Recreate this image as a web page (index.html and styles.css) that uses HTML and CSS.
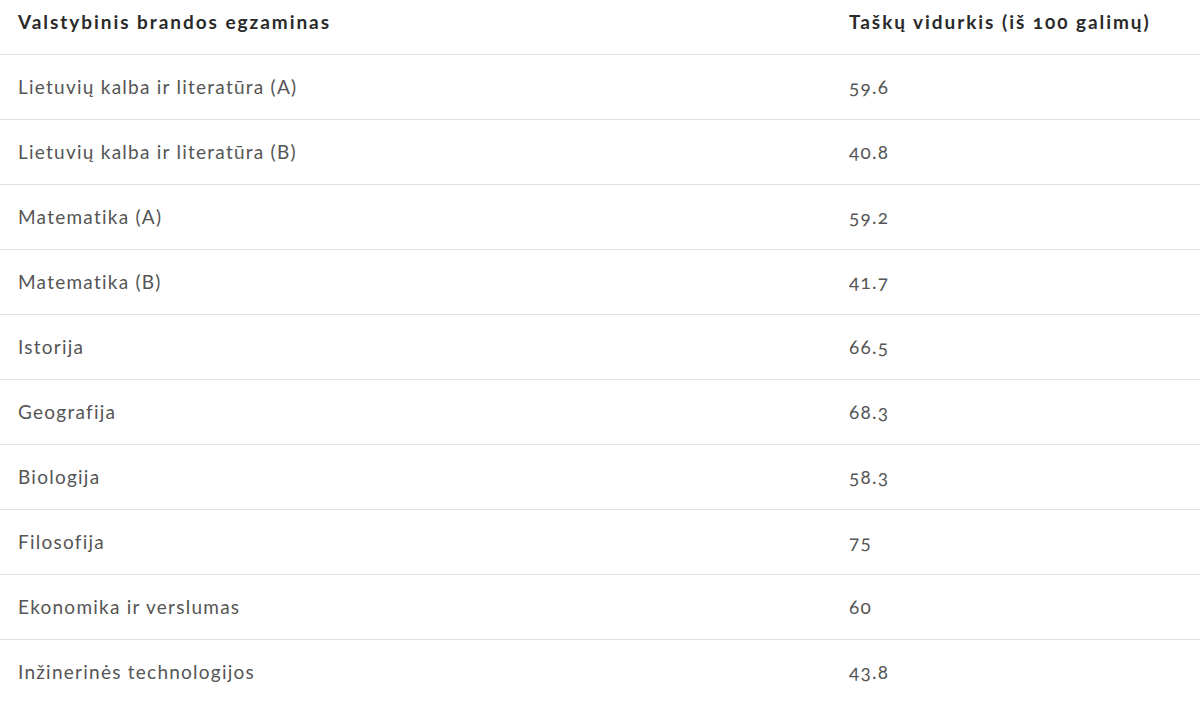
FILE: index.html
```html
<!DOCTYPE html>
<html lang="lt">
<head>
<meta charset="utf-8">
<title>Valstybiniai brandos egzaminai</title>
<link rel="stylesheet" href="styles.css">
</head>
<body>
<table class="results">
  <thead>
    <tr>
      <th class="col-exam">Valstybinis brandos egzaminas</th>
      <th class="col-score">Taškų vidurkis (iš 100 galimų)</th>
    </tr>
  </thead>
  <tbody>
    <tr><td>Lietuvių kalba ir literatūra (A)</td><td>59.6</td></tr>
    <tr><td>Lietuvių kalba ir literatūra (B)</td><td>40.8</td></tr>
    <tr><td>Matematika (A)</td><td>59.2</td></tr>
    <tr><td>Matematika (B)</td><td>41.7</td></tr>
    <tr><td>Istorija</td><td>66.5</td></tr>
    <tr><td>Geografija</td><td>68.3</td></tr>
    <tr><td>Biologija</td><td>58.3</td></tr>
    <tr><td>Filosofija</td><td>75</td></tr>
    <tr><td>Ekonomika ir verslumas</td><td>60</td></tr>
    <tr><td>Inžinerinės technologijos</td><td>43.8</td></tr>
  </tbody>
</table>
</body>
</html>
```

FILE: styles.css
```css
html, body {
  margin: 0;
  padding: 0;
  background: #ffffff;
}

body {
  font-family: Lato, "Open Sans", "Liberation Sans", sans-serif;
  color: #4a4a4a;
  font-variant-numeric: oldstyle-nums;
}

.results {
  width: 1200px;
  border-collapse: collapse;
  border-spacing: 0;
}

.results th {
  text-align: left;
  font-weight: 700;
  font-size: 19px;
  color: #2a2a2a;
  height: 54px;
  padding: 0 0 10px 18px;
  box-sizing: border-box;
  vertical-align: middle;
  letter-spacing: 1.95px;
}

.results .col-exam {
  width: 831px;
}

.results td {
  height: 65px;
  box-sizing: border-box;
  padding: 0 0 0 18px;
  border-top: 1px solid #e3e3e3;
  font-size: 19px;
  font-weight: 400;
  color: #555555;
  vertical-align: middle;
  letter-spacing: 1.25px;
}
```
